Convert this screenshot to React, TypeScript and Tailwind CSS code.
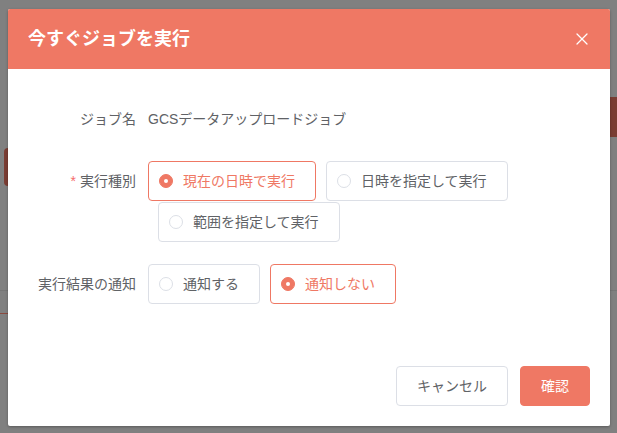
import { X } from "lucide-react";

const FONT = `font-['Liberation_Sans','Noto_Sans_CJK_JP',sans-serif]`;

interface RadioProps {
  label: string;
  checked?: boolean;
}

function RadioBox({ label, checked }: RadioProps) {
  return (
    <label
      className={`flex h-10 items-center rounded-[4px] border pl-[10px] pr-5 cursor-pointer ${
        checked ? "border-[#ef7864]" : "border-[#dcdfe6]"
      }`}
    >
      <span
        className={`flex h-[14px] w-[14px] items-center justify-center rounded-full border ${
          checked ? "border-[#ef7864] bg-[#ef7864]" : "border-[#dcdfe6] bg-white"
        }`}
      >
        {checked && <span className="h-[4px] w-[4px] rounded-full bg-white" />}
      </span>
      <span
        className={`pl-[10px] text-[14px] leading-none ${
          checked ? "text-[#ef7864]" : "text-[#606266]"
        }`}
      >
        {label}
      </span>
    </label>
  );
}

function FormRow({
  label,
  required,
  children,
}: {
  label: string;
  required?: boolean;
  children: React.ReactNode;
}) {
  return (
    <div className="mb-[22px] flex">
      <div className="w-[120px] shrink-0 pr-3 text-right text-[14px] leading-10 text-[#606266]">
        {required && <span className="mr-1 text-[#f56c6c]">*</span>}
        {label}
      </div>
      <div className="flex-1">{children}</div>
    </div>
  );
}

export default function App() {
  return (
    <div className={`relative h-[433px] w-full overflow-hidden bg-[#808080] ${FONT}`}>
      {/* page behind the overlay */}
      <div className="absolute left-[4px] top-[148px] h-[38px] w-[10px] rounded-[4px] bg-[#7a3d33]" />
      <div className="absolute right-0 top-[97px] h-[40px] w-[10px] bg-[#7a3d33]" />
      <div className="absolute left-0 top-[290px] h-px w-[10px] bg-[#767676]" />
      <div className="absolute right-0 top-[290px] h-px w-[10px] bg-[#767676]" />
      <div className="absolute left-0 top-[313px] h-px w-[10px] bg-[#8a4a3f]" />

      {/* dialog */}
      <div className="absolute left-[8px] top-[9px] w-[602px] rounded-[2px] bg-white shadow-[0_1px_3px_rgba(0,0,0,0.3)]">
        <div className="flex h-[60px] items-center justify-between rounded-t-[2px] bg-[#ef7864] pl-5 pr-[18px]">
          <h2 className="text-[18px] font-bold leading-6 text-white">今すぐジョブを実行</h2>
          <button className="flex h-5 w-5 items-center justify-center text-white">
            <X size={20} strokeWidth={1.5} />
          </button>
        </div>

        <div className="px-5 pb-[30px] pt-[30px]">
          <FormRow label="ジョブ名">
            <div className="text-[14px] leading-10 text-[#606266]">GCSデータアップロードジョブ</div>
          </FormRow>
          <FormRow label="実行種別" required>
            <div className="flex flex-wrap gap-y-px">
              <RadioBox label="現在の日時で実行" checked />
              <div className="ml-[10px]">
                <RadioBox label="日時を指定して実行" />
              </div>
              <div className="ml-[10px]">
                <RadioBox label="範囲を指定して実行" />
              </div>
            </div>
          </FormRow>
          <FormRow label="実行結果の通知">
            <div className="flex">
              <RadioBox label="通知する" />
              <div className="ml-[10px]">
                <RadioBox label="通知しない" checked />
              </div>
            </div>
          </FormRow>
        </div>

        <div className="flex justify-end gap-3 px-5 pb-5 pt-[10px]">
          <button className="h-10 rounded-[4px] border border-[#dcdfe6] bg-white px-5 text-[14px] text-[#606266]">
            キャンセル
          </button>
          <button className="h-10 rounded-[4px] border border-[#ef7864] bg-[#ef7864] px-5 text-[14px] text-white">
            確認
          </button>
        </div>
      </div>
    </div>
  );
}
